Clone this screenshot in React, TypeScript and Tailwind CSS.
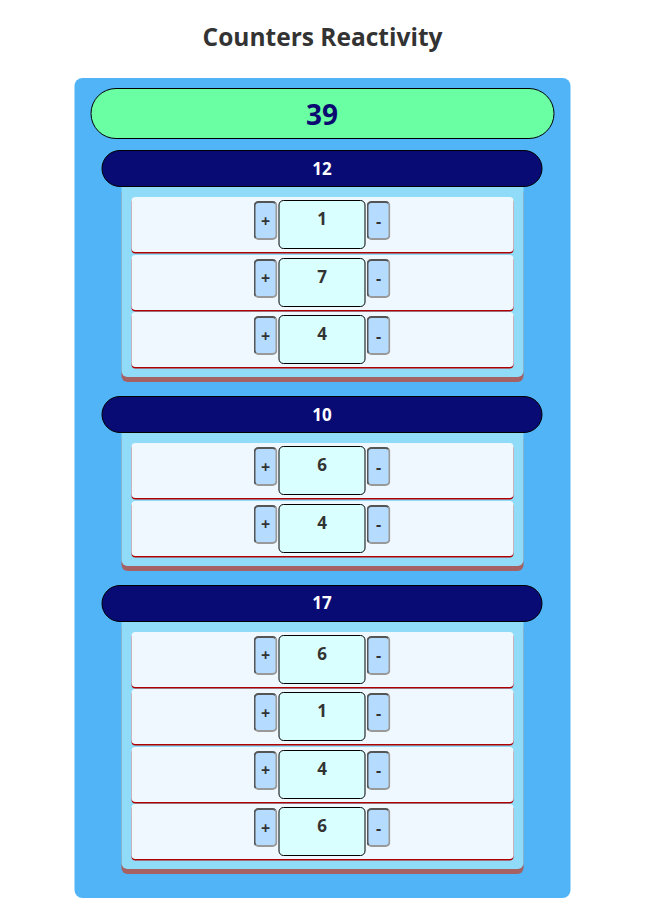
import React from 'react';

const groups = [
  { id: 1, counters: [1, 7, 4] },
  { id: 2, counters: [6, 4] },
  { id: 3, counters: [6, 1, 4, 6] },
];

const font = { fontFamily: '"Open Sans", "Noto Sans", Arial, sans-serif' };

const StepButton = ({ label }: { label: string }) => (
  <button className="mt-[1px] flex h-[39px] w-[24px] items-center justify-center rounded-[5px] border-2 border-t-[#555] border-l-[#555] border-r-[#999] border-b-[#999] bg-[#b5dcfe] text-[16px] font-bold text-[#333]">
    {label}
  </button>
);

const CounterRow = ({ value }: { value: number }) => (
  <div className="flex h-[55px] items-start justify-center rounded-[4px] bg-[#f0f8ff] pt-[3px] shadow-[0_1.5px_0_#b00000]">
    <StepButton label="+" />
    <div className="mx-[1px] h-[49px] w-[87px] rounded-[5px] border border-black bg-[#d9ffff] pt-[5px] text-center text-[17px] leading-[25px] font-bold text-[#333]">
      {value}
    </div>
    <StepButton label="-" />
  </div>
);

const CounterGroup = ({ counters }: { counters: number[] }) => {
  const total = counters.reduce((a, b) => a + b, 0);
  return (
    <div className="mb-[19px]">
      <div className="mx-auto flex h-[37px] w-[95%] items-center justify-center rounded-full border border-black bg-[#090b74] text-[17px] font-bold text-white">
        {total}
      </div>
      <div className="mx-auto flex w-[402px] flex-col gap-[2.5px] rounded-b-[6px] bg-[#90dcf8] p-[10px] shadow-[0_5px_0_#a66262]">
        {counters.map((c, i) => (
          <CounterRow key={i} value={c} />
        ))}
      </div>
    </div>
  );
};

export default function App() {
  const total = groups.reduce(
    (sum, g) => sum + g.counters.reduce((a, b) => a + b, 0),
    0,
  );

  return (
    <div className="min-h-[912px] bg-white pt-[19px]" style={font}>
      <h1 className="mb-[23px] text-center text-[24.5px] leading-[36px] font-bold text-[#333]">
        Counters Reactivity
      </h1>
      <div className="mx-auto w-[496px] -translate-x-[0.5px] rounded-[8px] bg-[#50b4f7] px-4 pt-[10px] pb-[10px]">
        <div className="mb-[11px] flex h-[51px] items-center justify-center rounded-full border border-black bg-[#6bffa3] text-[28px] font-bold text-[#0a0a70]">
          {total}
        </div>
        {groups.map((g) => (
          <CounterGroup key={g.id} counters={g.counters} />
        ))}
      </div>
    </div>
  );
}
